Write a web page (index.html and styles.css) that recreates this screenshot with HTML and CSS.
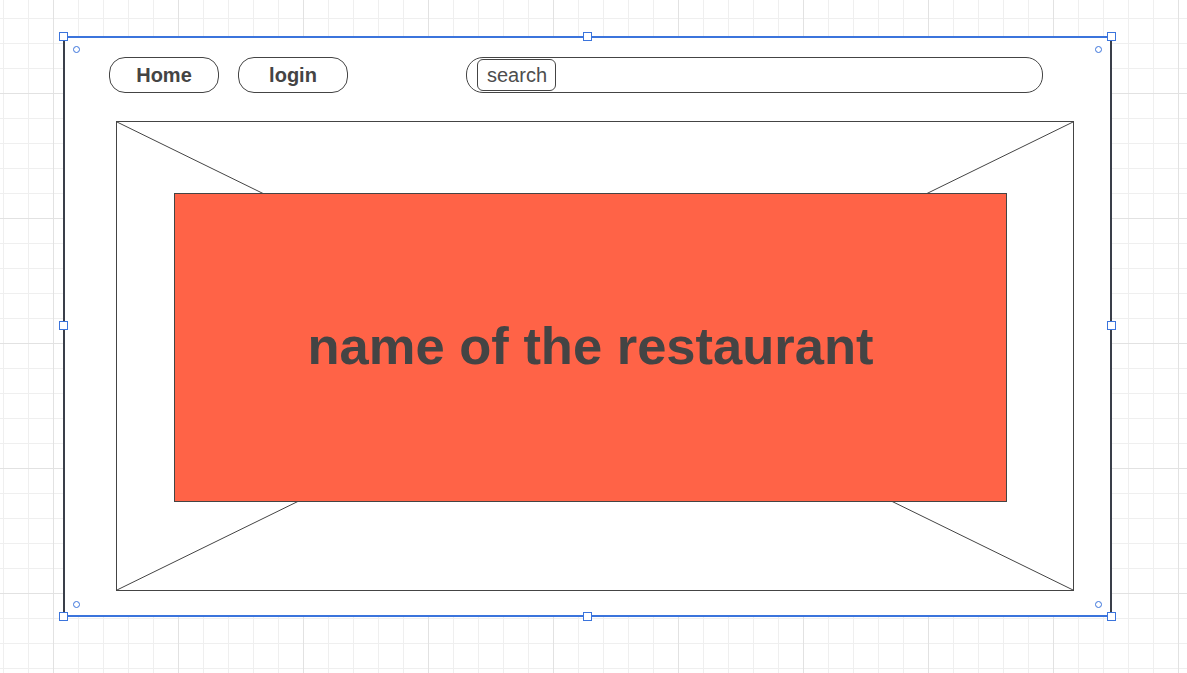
FILE: index.html
```html
<!DOCTYPE html>
<html lang="en">
<head>
<meta charset="utf-8">
<title>Restaurant wireframe</title>
<link rel="stylesheet" href="styles.css">
</head>
<body>
<div class="frame">
  <nav class="nav">
    <button class="pill">Home</button>
    <button class="pill pill-gap">login</button>
    <div class="search-bar">
      <span class="search-label">search</span>
    </div>
  </nav>
  <div class="placeholder">
    <svg class="cross" viewBox="0 0 100 100" preserveAspectRatio="none" aria-hidden="true">
      <line x1="0" y1="0" x2="100" y2="100" vector-effect="non-scaling-stroke"/>
      <line x1="100" y1="0" x2="0" y2="100" vector-effect="non-scaling-stroke"/>
    </svg>
    <div class="hero">
      <h1 class="hero-title">name of the restaurant</h1>
    </div>
  </div>
  <span class="handle h-tl"></span>
  <span class="handle h-tm"></span>
  <span class="handle h-tr"></span>
  <span class="handle h-ml"></span>
  <span class="handle h-mr"></span>
  <span class="handle h-bl"></span>
  <span class="handle h-bm"></span>
  <span class="handle h-br"></span>
  <span class="dot d-tl"></span>
  <span class="dot d-tr"></span>
  <span class="dot d-bl"></span>
  <span class="dot d-br"></span>
</div>
</body>
</html>
```

FILE: styles.css
```css
html, body {
  margin: 0;
  padding: 0;
}

body {
  width: 1187px;
  height: 673px;
  overflow: hidden;
  font-family: "Liberation Sans", Arial, sans-serif;
  background-color: #ffffff;
  background-image:
    linear-gradient(to right, #e2e2e2 1px, transparent 1px),
    linear-gradient(to bottom, #e2e2e2 1px, transparent 1px),
    linear-gradient(to right, #efefef 1px, transparent 1px),
    linear-gradient(to bottom, #efefef 1px, transparent 1px);
  background-size: 125px 125px, 125px 125px, 25px 25px, 25px 25px;
  background-position: 53px 0, 0 93px, 3px 0, 0 18px;
  padding-top: 36px;
  box-sizing: border-box;
}

.frame {
  position: relative;
  box-sizing: border-box;
  margin-left: 63px;
  width: 1049px;
  height: 581px;
  background: #ffffff;
  border-left: 2px solid #3a3f4a;
  border-right: 2px solid #3a3f4a;
  border-top: 2px solid #3b74dc;
  border-bottom: 2px solid #3b74dc;
  display: flex;
  flex-direction: column;
}

.nav {
  display: flex;
  align-items: center;
  padding-top: 19px;
  padding-left: 44px;
}

.pill {
  box-sizing: border-box;
  width: 110px;
  height: 36px;
  border: 1px solid #444444;
  border-radius: 16px;
  background: #ffffff;
  font-family: "Liberation Sans", Arial, sans-serif;
  font-weight: bold;
  font-size: 20px;
  color: #444444;
  padding: 0;
  line-height: 34px;
}

.pill-gap {
  margin-left: 19px;
}

.search-bar {
  box-sizing: border-box;
  margin-left: 118px;
  width: 577px;
  height: 36px;
  border: 1px solid #444444;
  border-radius: 17px;
  display: flex;
  align-items: center;
  padding-left: 10px;
}

.search-label {
  box-sizing: border-box;
  height: 32px;
  padding: 0 8px 0 9px;
  border: 1px solid #444444;
  border-radius: 6px;
  font-size: 20px;
  line-height: 30px;
  color: #4d4d4d;
}

.placeholder {
  position: relative;
  box-sizing: border-box;
  margin-top: 28px;
  margin-left: 51px;
  width: 958px;
  height: 470px;
  border: 1px solid #444444;
  padding: 71px 66px 88px 57px;
}

.cross {
  position: absolute;
  top: 0;
  left: 0;
  width: 100%;
  height: 100%;
}

.cross line {
  stroke: #444444;
  stroke-width: 1;
}

.hero {
  position: relative;
  box-sizing: border-box;
  height: 100%;
  background: #ff6347;
  border: 1px solid #444444;
  display: flex;
  align-items: center;
  justify-content: center;
  padding-bottom: 4px;
}

.hero-title {
  margin: 0;
  font-family: "Liberation Sans", Arial, sans-serif;
  font-weight: bold;
  font-size: 52.5px;
  color: #444444;
}

.handle {
  position: absolute;
  box-sizing: border-box;
  width: 9px;
  height: 9px;
  background: #ffffff;
  border: 1px solid #3b74dc;
}

.h-tl { left: -6px; top: -6px; }
.h-tm { left: 518px; top: -6px; }
.h-tr { right: -6px; top: -6px; }
.h-ml { left: -6px; top: 283px; }
.h-mr { right: -6px; top: 283px; }
.h-bl { left: -6px; bottom: -6px; }
.h-bm { left: 518px; bottom: -6px; }
.h-br { right: -6px; bottom: -6px; }

.dot {
  position: absolute;
  box-sizing: border-box;
  width: 7px;
  height: 7px;
  border: 1px solid #3b74dc;
  border-radius: 50%;
  background: #ffffff;
}

.d-tl { left: 8px; top: 8px; }
.d-tr { right: 8px; top: 8px; }
.d-bl { left: 8px; bottom: 7px; }
.d-br { right: 8px; bottom: 7px; }
```
